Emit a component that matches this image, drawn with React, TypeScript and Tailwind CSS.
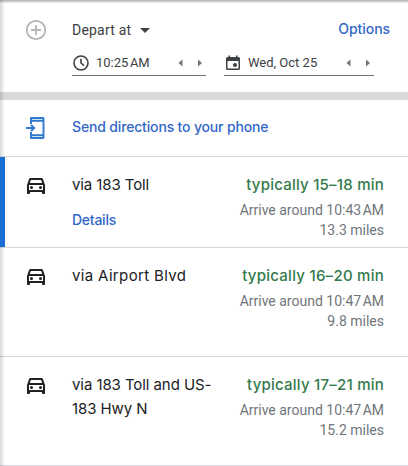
import React from 'react';

const brand = "font-['Inter','Liberation_Sans',sans-serif]";

type Route = {
  name: string[];
  nameClass: string;
  time: string;
  timeClass: string;
  arrive: string;
  miles: string;
  selected?: boolean;
  rowClass: string;
};

const routes: Route[] = [
  { name: ['via 183 Toll'], nameClass: 'tracking-[-0.1px]', time: 'typically 15–18 min', timeClass: 'tracking-[0.23px]', arrive: '10:43', miles: '13.3 miles', selected: true, rowClass: 'h-[91px]' },
  { name: ['via Airport Blvd'], nameClass: 'tracking-[0.35px]', time: 'typically 16–20 min', timeClass: 'tracking-[0.26px]', arrive: '10:47', miles: '9.8 miles', rowClass: 'h-[109px]' },
  { name: ['via 183 Toll and US-', '183 Hwy N'], nameClass: 'tracking-[-0.08px]', time: 'typically 17–21 min', timeClass: 'tracking-[0.23px]', arrive: '10:47', miles: '15.2 miles', rowClass: 'h-[109px]' },
];

function CarIcon() {
  return (
    <svg width="24" height="24" viewBox="0 0 24 24" fill="#202124" className="shrink-0">
      <path d="M18.92 6.01C18.72 5.42 18.16 5 17.5 5h-11c-.66 0-1.21.42-1.42 1.01L3 12v8c0 .55.45 1 1 1h1c.55 0 1-.45 1-1v-1h12v1c0 .55.45 1 1 1h1c.55 0 1-.45 1-1v-8l-2.08-5.99zM6.85 7h10.29l1.08 3.11H5.77L6.85 7zM19 17H5v-5h14v5z" />
      <circle cx="7.5" cy="14.5" r="1.5" />
      <circle cx="16.5" cy="14.5" r="1.5" />
    </svg>
  );
}

function Steppers() {
  return (
    <svg width="28" height="10" viewBox="0 0 28 10" fill="#70757a" className="ml-auto">
      <path d="M4.5 1.5v7l-4-3.5zM20 1.5v7l4-3.5z" />
    </svg>
  );
}

function RouteRow({ route }: { route: Route }) {
  return (
    <div className={`flex border-b border-[#d5d7da] ${route.rowClass}`}>
      <div className={`w-[5px] shrink-0 ${route.selected ? 'relative z-10 bg-[#1a6fd6]' : ''}`} />
      <div className="ml-[19px] pt-4">
        <CarIcon />
      </div>
      <div className="ml-6 pt-4">
        {route.name.map((line) => (
          <div key={line} className={`${brand} ${route.nameClass} whitespace-nowrap text-[15px] leading-6 text-[#202124]`}>{line}</div>
        ))}
        {route.selected && (
          <div className={`${brand} mt-[13px] text-[14px] font-medium leading-5 tracking-[-0.25px] text-[#3367c8]`}>Details</div>
        )}
      </div>
      <div className="ml-auto whitespace-nowrap pr-6 pt-4 text-right text-[14px] leading-5 text-[#70757a]">
        <div className={`${brand} ${route.timeClass} text-[15px] font-medium leading-6 text-[#337a4c]`}>{route.time}</div>
        <div className="mt-[3px]">Arrive around {route.arrive}<span className="ml-[1.5px]">AM</span></div>
        <div>{route.miles}</div>
      </div>
    </div>
  );
}

export default function App() {
  return (
    <div className="relative h-[466px] w-[408px] overflow-hidden bg-white font-['Roboto','Liberation_Sans',sans-serif]">
      <div className="h-[92px] border-t border-[#bdbdbd] pl-6 pr-[18px] shadow-[inset_0_2px_2px_-1px_#bbb]">
        <div className="flex h-[43px] items-end">
          <svg width="24" height="24" viewBox="0 0 24 24" fill="none" stroke="#b5b5b5" strokeWidth="1.8" className="mb-[2px]">
            <circle cx="12" cy="12" r="9.2" />
            <path d="M12 7v10M7 12h10" />
          </svg>
          <div className="mb-[2px] ml-6 flex items-center text-[14px] leading-6 text-[#3c4043]">
            <span className="tracking-[0.2px]">Depart at</span>
            <svg width="10" height="5" viewBox="0 0 10 5" fill="#3c4043" className="ml-[9px]"><path d="M0 0h10L5 5z" /></svg>
          </div>
          <span className={`${brand} mb-[3px] ml-auto text-[14px] font-medium leading-6 tracking-[-0.05px] text-[#3367c8]`}>Options</span>
        </div>
        <div className="flex pl-12 pt-[6px] text-[13px] text-[#3c4043]">
          <div className="flex h-[26px] w-[134px] items-center border-b border-[#70757a]">
            <svg width="18" height="18" viewBox="0 0 18 18" fill="none" stroke="#3c4043" strokeWidth="1.6">
              <circle cx="9" cy="9" r="7" />
              <path d="M9 4.8V9l3 2.6" />
            </svg>
            <span className="ml-[6px] pt-px">10:25<span className="ml-[1.5px]">AM</span></span>
            <Steppers />
          </div>
          <div className="ml-[18px] flex h-[26px] w-[150px] items-center border-b border-[#70757a]">
            <svg width="18" height="18" viewBox="0 0 18 18" fill="#3c4043">
              <path fillRule="evenodd" d="M4.5 1.5H6V3h6V1.5h1.5V3h1A1.5 1.5 0 0 1 16 4.5v10a1.5 1.5 0 0 1-1.5 1.5h-11A1.5 1.5 0 0 1 2 14.5v-10A1.5 1.5 0 0 1 3.5 3h1zM3.5 7v7.5h11V7z" />
              <circle cx="11" cy="11" r="2" />
            </svg>
            <span className="ml-[6px] pt-px">Wed, Oct 25</span>
            <Steppers />
          </div>
        </div>
      </div>
      <div className="h-2 bg-[#d9dadc]" />
      <div className="flex h-[57px] items-center border-b border-[#d5d7da] pl-6">
        <svg width="24" height="24" viewBox="0 0 24 24" fill="none" stroke="#2f78cf" strokeWidth="1.9" className="shrink-0">
          <path d="M7 8V2.3Q7 2 7.3 2H19q.5 0 .5.5v19q0 .5-.5.5H7.300Q7 22 7 21.700V16M7 4.700h12.500M7 19.300h12.500" />
          <path d="M2 12h7.500M7 8.800l3.200 3.200L7 15.200" />
        </svg>
        <span className={`${brand} ml-6 whitespace-nowrap pb-[3px] text-[14px] font-medium tracking-[-0.16px] text-[#3367c8]`}>Send directions to your phone</span>
      </div>
      {routes.map((route) => (
        <RouteRow key={route.time} route={route} />
      ))}
      <div className="pointer-events-none absolute inset-y-0 left-0 w-[5px] bg-gradient-to-r from-black/15 to-transparent" />
    </div>
  );
}
